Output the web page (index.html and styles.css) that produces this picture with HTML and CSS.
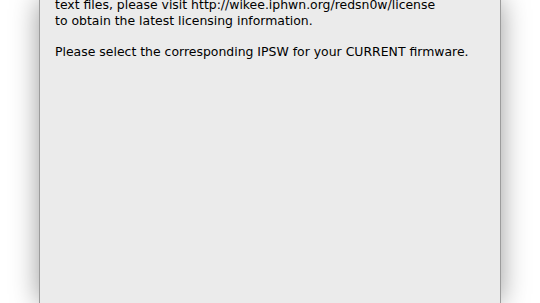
FILE: index.html
```html
<!DOCTYPE html>
<html>
<head>
<meta charset="utf-8">
<link rel="stylesheet" href="styles.css">
</head>
<body>
<div class="window">
  <div class="content">
    <p class="para">text files, please visit http://wikee.iphwn.org/redsn0w/license<br>to obtain the latest licensing information.</p>
    <p class="para">Please select the corresponding IPSW for your CURRENT firmware.</p>
  </div>
</div>
</body>
</html>
```
FILE: styles.css
```css
html, body {
  margin: 0;
  padding: 0;
  background: #ffffff;
  overflow: hidden;
  height: 303px;
}
.window {
  margin-left: 39px;
  width: 460px;
  height: 303px;
  overflow: hidden;
  background: #ebebeb;
  border-left: 1px solid #9c9c9c;
  border-right: 1px solid #9c9c9c;
  box-shadow: 0 0 26px rgba(0, 0, 0, 0.4);
}
.content {
  padding-left: 15px;
  padding-top: 1px;
  margin-top: -4px;
  font-family: "DejaVu Sans", sans-serif;
  font-size: 12.45px;
  line-height: 15.5px;
  color: #000;
}
.para {
  margin: 0 0 15.5px 0;
}
```
